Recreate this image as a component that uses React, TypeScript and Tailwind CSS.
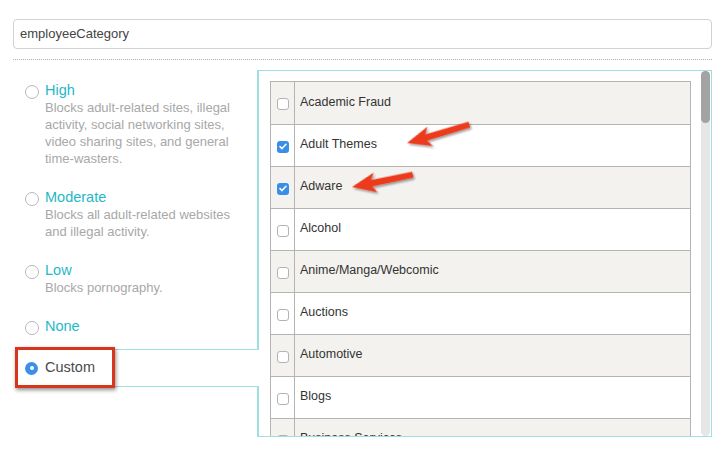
import React from "react";

const options = [
  {
    label: "High",
    desc: ["Blocks adult-related sites, illegal", "activity, social networking sites,", "video sharing sites, and general", "time-wasters."],
  },
  { label: "Moderate", desc: ["Blocks all adult-related websites", "and illegal activity."] },
  { label: "Low", desc: ["Blocks pornography."] },
  { label: "None", desc: [] },
];

const categories = [
  { name: "Academic Fraud", checked: false },
  { name: "Adult Themes", checked: true },
  { name: "Adware", checked: true },
  { name: "Alcohol", checked: false },
  { name: "Anime/Manga/Webcomic", checked: false },
  { name: "Auctions", checked: false },
  { name: "Automotive", checked: false },
  { name: "Blogs", checked: false },
  { name: "Business Services", checked: false },
];

function Radio({ on }: { on?: boolean }) {
  if (on) {
    return (
      <span className="flex h-[13px] w-[13px] shrink-0 items-center justify-center rounded-full bg-[#3b8fe6]">
        <span className="block h-[4px] w-[4px] rounded-full bg-white" />
      </span>
    );
  }
  return <span className="block h-[14px] w-[14px] shrink-0 rounded-full border border-[#b8b8b8] bg-white" />;
}

function Checkbox({ on }: { on: boolean }) {
  if (on) {
    return (
      <span className="flex h-[12px] w-[12px] items-center justify-center rounded-[3px] bg-[#3a8ee6]">
        <svg width="8" height="7" viewBox="0 0 8 7">
          <path d="M1 3.6 L3 5.6 L7 1.2" fill="none" stroke="white" strokeWidth="1.5" strokeLinecap="round" strokeLinejoin="round" />
        </svg>
      </span>
    );
  }
  return <span className="block h-[12px] w-[12px] rounded-[3px] border border-[#b3b3b3] bg-white" />;
}

function Arrow({ x, y, angle, len }: { x: number; y: number; angle: number; len: number }) {
  return (
    <g transform={`translate(${x} ${y}) rotate(${angle})`} filter="url(#ash)">
      <polygon points={`0,0 24,-10 20,-3.2 ${len},-3.6 ${len},2.6 20,3.2 24,10`} fill="#ec3a1c" />
    </g>
  );
}

export default function App() {
  return (
    <div className="relative h-[471px] w-[726px] overflow-hidden bg-white pt-[19px] pl-[13px] font-['Liberation_Sans',Arial,sans-serif]">
      <div className="w-[699px]">
        <div className="flex h-[30px] items-center rounded-[4px] border border-[#d2d2d2] px-[6px] text-[13px] text-[#444]">
          employeeCategory
        </div>
        <div className="mt-[10px] border-t border-dotted border-[#b0b0b0]" />

        <div className="mt-[10px] flex">
          <div className="flex w-[245px] shrink-0 flex-col">
            <div className="flex h-[279px] flex-col gap-[21px] border-r border-[#9edfe0] pt-[11px] pl-[12px]">
              {options.map((o) => (
                <div key={o.label} className="flex gap-[6px]">
                  <div className="mt-[4px]">
                    <Radio />
                  </div>
                  <div>
                    <div className="text-[14.5px] leading-[18px] text-[#1fb8c8]">{o.label}</div>
                    {o.desc.map((d) => (
                      <div key={d} className="text-[13px] leading-[17px] text-[#a8a8a8]">
                        {d}
                      </div>
                    ))}
                  </div>
                </div>
              ))}
            </div>
            <div className="relative z-10 -mr-[1px] ml-[2px] flex h-[38px] items-center gap-[7px] border-y border-[#9edfe0] bg-white pl-[10px]">
              <Radio on />
              <span className="text-[14.5px] text-[#4a4a4a]">Custom</span>
            </div>
            <div className="h-[50px] border-r border-[#9edfe0]" />
          </div>

          <div className="flex h-[367px] flex-1 border border-[#9edfe0] pl-[11px]">
            <div className="mt-[10px] flex-1 overflow-hidden">
              <div className="border border-[#b4b4b4]">
                {categories.map((c, i) => (
                  <div
                    key={c.name}
                    className={`flex h-[42px] border-[#b4b4b4] ${i > 0 ? "border-t" : ""} ${i % 2 === 0 ? "bg-[#f3f2ef]" : "bg-white"}`}
                  >
                    <div className="flex w-[24px] shrink-0 items-center justify-center border-r border-[#b4b4b4] pt-[2px]">
                      <Checkbox on={c.checked} />
                    </div>
                    <div className="flex items-center pb-[2px] pl-[5px] text-[12.5px] text-[#333]">{c.name}</div>
                  </div>
                ))}
              </div>
            </div>
            <div className="ml-[10px] mr-[1px] w-[9px] rounded-full bg-[#e6e6e6]">
              <div className="h-[52px] rounded-full bg-[#a3a3a3]" />
            </div>
          </div>
        </div>
      </div>

      <div className="absolute left-[15px] top-[347px] z-20 h-[41px] w-[100px] border-[3px] border-[#d9351d] shadow-[1px_2px_4px_rgba(0,0,0,0.45)]" />

      <svg className="pointer-events-none absolute left-0 top-0 z-20" width="726" height="471">
        <defs>
          <filter id="ash" x="-20%" y="-50%" width="140%" height="200%">
            <feDropShadow dx="1" dy="2" stdDeviation="1.2" floodColor="#000" floodOpacity="0.4" />
          </filter>
        </defs>
        <Arrow x={407} y={143} angle={-16} len={65} />
        <Arrow x={352} y={187} angle={-11} len={62} />
      </svg>
    </div>
  );
}
